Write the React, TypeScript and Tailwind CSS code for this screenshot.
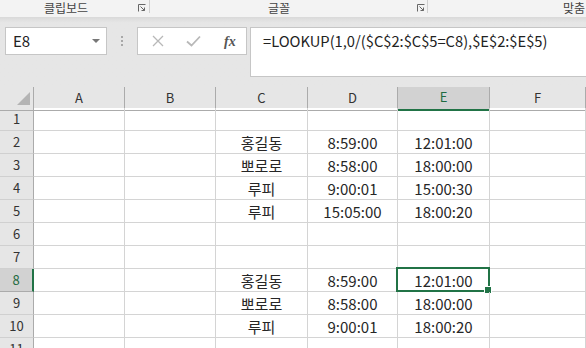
import React from "react";

const font = { fontFamily: '"Noto Sans CJK KR", "Noto Sans", sans-serif' };

const cols = "grid grid-cols-[34px_91px_91px_92px_90px_92px_96px]";

type Row = { n: number; c?: string; d?: string; e?: string };
const rows: Row[] = [
  { n: 1 },
  { n: 2, c: "홍길동", d: "8:59:00", e: "12:01:00" },
  { n: 3, c: "뽀로로", d: "8:58:00", e: "18:00:00" },
  { n: 4, c: "루피", d: "9:00:01", e: "15:00:30" },
  { n: 5, c: "루피", d: "15:05:00", e: "18:00:20" },
  { n: 6 },
  { n: 7 },
  { n: 8, c: "홍길동", d: "8:59:00", e: "12:01:00" },
  { n: 9, c: "뽀로로", d: "8:58:00", e: "18:00:00" },
  { n: 10, c: "루피", d: "9:00:01", e: "18:00:20" },
  { n: 11 },
];

function Launcher() {
  return (
    <svg width="8" height="8" viewBox="0 0 8 8" className="block">
      <path d="M0.5 7.5V0.5H7.5" fill="none" stroke="#666" strokeWidth="1" />
      <path d="M2.5 2.5L6.5 6.5M3.5 6.5H6.5V3.5" fill="none" stroke="#666" strokeWidth="1" />
    </svg>
  );
}

export default function App() {
  return (
    <div className="w-[586px] h-[348px] overflow-hidden bg-white relative" style={font}>
      {/* Ribbon group labels */}
      <div className="h-[17px] bg-[#f3f3f3] flex items-start text-[12px] leading-[14px] text-[#444]">
        <div className="w-[149px] flex pt-[1px] relative">
          <span className="ml-[44px]">클립보드</span>
          <span className="absolute left-[138px] top-[4px]"><Launcher /></span>
        </div>
        <div className="w-[1px] h-[13px] bg-[#d0d0d0]" />
        <div className="w-[277px] flex pt-[1px] relative">
          <span className="ml-[118px]">글꼴</span>
          <span className="absolute left-[267px] top-[4px]"><Launcher /></span>
        </div>
        <div className="w-[1px] h-[13px] bg-[#d0d0d0]" />
        <div className="flex-1 flex pt-[1px]">
          <span className="ml-[135px] whitespace-nowrap">맞춤</span>
        </div>
      </div>
      {/* Formula bar area */}
      <div className="h-[70px] bg-gradient-to-b from-[#d9d9d9] via-[#e6e6e6] via-[8%] to-[#e6e6e6] flex items-start pt-[10px]">
        <div className="ml-[5px] w-[102px] h-[28px] bg-white border border-[#c6c6c6] flex items-center justify-between pl-[7px] pr-[6px]">
          <span className="text-[15px] text-[#222]">E8</span>
          <svg width="8" height="5" viewBox="0 0 8 5"><path d="M0 0H8L4 4Z" fill="#777" /></svg>
        </div>
        <div className="w-[30px] h-[28px] flex flex-col items-center justify-center gap-[2px]">
          <span className="w-[2px] h-[2px] bg-[#a8a8a8]" />
          <span className="w-[2px] h-[2px] bg-[#a8a8a8]" />
          <span className="w-[2px] h-[2px] bg-[#a8a8a8]" />
        </div>
        <div className="w-[110px] h-[28px] bg-white border border-[#c6c6c6] flex items-center">
          <svg width="12" height="12" viewBox="0 0 12 12" className="ml-[14px]">
            <path d="M1 1L11 11M11 1L1 11" stroke="#b8b8b8" strokeWidth="1.3" />
          </svg>
          <svg width="15" height="12" viewBox="0 0 15 12" className="ml-[22px]">
            <path d="M1 6.5L5.5 10.5L14 1.5" fill="none" stroke="#b8b8b8" strokeWidth="1.8" />
          </svg>
          <span className="ml-[23px] text-[14px] italic font-bold text-[#555]" style={{ fontFamily: '"Liberation Serif", serif' }}>fx</span>
        </div>
        <div className="ml-[3px] flex-1 h-[50px] bg-white border border-r-0 border-[#c6c6c6] pl-[12px] pt-[3px] text-[14.7px] leading-[20px] text-[#222] whitespace-nowrap">
          =LOOKUP(1,0/($C$2:$C$5=C8),$E$2:$E$5)
        </div>
      </div>
      {/* Column headers */}
      <div className={`${cols} h-[21px] bg-[#e6e6e6] text-[13px] text-[#333]`}>
        <div className="border-r border-b border-[#ababab] relative">
          <svg width="14" height="14" viewBox="0 0 14 14" className="absolute left-[17px] top-[5px]">
            <path d="M13 0V13H0Z" fill="#b4b4b4" />
          </svg>
        </div>
        {["A", "B", "C", "D", "E", "F"].map((l) =>
          l === "E" ? (
            <div key={l} className="bg-[#d2d2d2] border-r border-[#ababab] border-b-2 border-b-[#217346] flex items-center justify-center text-[#1e6b41] pb-[2px]">
              {l}
            </div>
          ) : (
            <div key={l} className="border-r border-b border-[#ababab] flex items-center justify-center pb-[1px]">
              {l}
            </div>
          )
        )}
      </div>
      {/* Rows */}
      {rows.map((r) => {
        const sel = r.n === 8;
        return (
          <div key={r.n} className={`${cols} h-[23px] text-[15px] text-[#262626]`}>
            <div
              className={
                sel
                  ? "bg-[#d2d2d2] border-r-2 border-r-[#217346] border-b border-b-[#ababab] flex items-center justify-center text-[13px] text-[#1e6b41]"
                  : "bg-[#e6e6e6] border-r border-b border-[#ababab] border-b-[#d0d0d0] flex items-center justify-center text-[13px] text-[#333]"
              }
            >
              {r.n}
            </div>
            <div className="border-r border-b border-[#d4d4d4]" />
            <div className="border-r border-b border-[#d4d4d4]" />
            <div className="border-r border-b border-[#d4d4d4] flex items-center justify-center leading-none pt-[1px]">{r.c}</div>
            <div className="border-r border-b border-[#d4d4d4] flex items-center justify-center leading-none pt-[1px]">{r.d}</div>
            <div className="border-r border-b border-[#d4d4d4] flex items-center justify-center leading-none pt-[1px] relative">
              {r.e}
              {sel && (
                <div className="absolute left-[-2px] top-[-2px] right-[-1px] bottom-[-1px] border-2 border-[#217346]">
                  <div className="absolute right-[-4px] bottom-[-4px] w-[6px] h-[6px] bg-[#217346] border border-white box-content" />
                </div>
              )}
            </div>
            <div className="border-r border-b border-[#d4d4d4]" />
          </div>
        );
      })}
    </div>
  );
}
